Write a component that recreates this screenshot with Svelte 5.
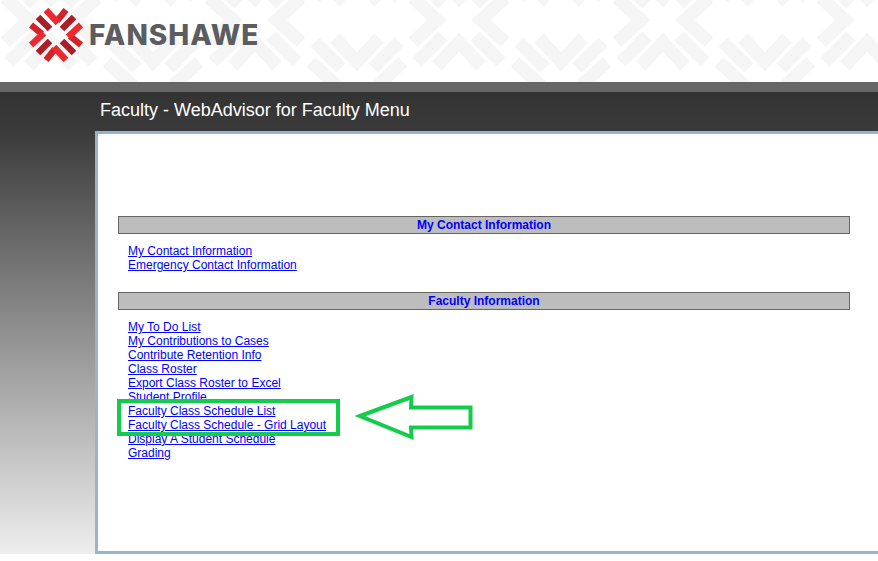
<script>
  const sections = [
    { title: 'My Contact Information', links: ['My Contact Information', 'Emergency Contact Information'] },
    { title: 'Faculty Information', links: ['My To Do List', 'My Contributions to Cases', 'Contribute Retention Info', 'Class Roster', 'Export Class Roster to Excel', 'Student Profile', 'Faculty Class Schedule List', 'Faculty Class Schedule - Grid Layout', 'Display A Student Schedule', 'Grading'] }
  ];
  const arms = [0, 90, 180, 270];
</script>

<div class="page">
  <header class="brand">
    <svg class="pattern" width="878" height="82" aria-hidden="true">
      <defs>
        <g id="motif" fill="none" stroke="#f5f5f5" stroke-width="13">
          <path d="M-22 -46 L0 -22 L22 -46" />
          <path d="M-46 22 L-22 0 L-46 -22" />
          <path d="M22 46 L0 22 L-22 46" />
          <path d="M46 -22 L22 0 L46 22" />
          <path d="M-42 -42 L-16 -16 M42 -42 L16 -16" />
          <path d="M-42 42 L-16 16 M42 42 L16 16" />
        </g>
        <pattern id="weave" width="204" height="128" patternUnits="userSpaceOnUse">
          <use href="#motif" x="51" y="20" />
          <use href="#motif" x="153" y="84" />
          <use href="#motif" x="153" y="-44" />
          <use href="#motif" x="-51" y="84" />
          <use href="#motif" x="51" y="148" />
        </pattern>
      </defs>
      <rect width="878" height="82" fill="url(#weave)" />
    </svg>
    <svg class="mark" width="54" height="54" viewBox="-27 -27 54 54" aria-hidden="true">
      {#each arms as a}
        <g transform="rotate({a})" fill="none" stroke-width="6.5">
          <path d="M-18 -18 L-6 -6" stroke="#a91f27" />
          <path d="M10 -25 L1 -14" stroke="#d2232a" />
          <path d="M-10 -25 L2 -12" stroke="#ea2a2f" />
        </g>
      {/each}
    </svg>
    <span class="wordmark">FANSHAWE</span>
  </header>
  <div class="band"></div>
  <div class="shell">
    <h1>Faculty - WebAdvisor for Faculty Menu</h1>
    <main class="panel">
      {#each sections as s}
        <section>
          <h2>{s.title}</h2>
          <ul>
            {#each s.links as l}
              <li><a href="#top">{l}</a></li>
            {/each}
          </ul>
        </section>
      {/each}
    </main>
    <div class="highlight"></div>
    <svg class="arrow" width="125" height="52" viewBox="352 392 125 52" aria-hidden="true">
      <polygon points="360,416 411.5,397 411,407.5 470.5,407.5 470.5,427.5 411,427.5 411.5,437" fill="none" stroke="#12cc4a" stroke-width="4" />
    </svg>
  </div>
</div>

<style>
  :global(body) {
    margin: 0;
    background: #fff;
  }
  .page {
    width: 878px;
    height: 561px;
    overflow: hidden;
    font-family: "Liberation Sans", Arial, sans-serif;
  }
  .brand {
    position: relative;
    height: 82px;
    display: flex;
    align-items: flex-start;
    background: #fff;
    box-sizing: border-box;
    padding: 8px 0 0 29px;
  }
  .pattern {
    position: absolute;
    inset: 0;
  }
  .mark {
    position: relative;
    flex: none;
  }
  .wordmark {
    position: relative;
    margin: 9px 0 0 6px;
    font-family: Inter, "Liberation Sans", sans-serif;
    font-weight: 800;
    font-size: 28px;
    line-height: 36px;
    letter-spacing: 1px;
    color: #5c5d60;
  }
  .band {
    height: 10px;
    background: #666;
  }
  .shell {
    position: relative;
    height: 462px;
    box-sizing: border-box;
    padding-left: 95px;
    background: linear-gradient(#333 0%, #3a3a3a 8%, #eee 100%);
  }
  h1 {
    margin: 0;
    height: 39px;
    padding-left: 5px;
    font-size: 18px;
    font-weight: 400;
    line-height: 37px;
    color: #fff;
  }
  .panel {
    height: 423px;
    box-sizing: border-box;
    background: #fff;
    border: solid #98b3cd;
    border-width: 3px 0 3px 3px;
    padding: 82px 28px 0 20px;
  }
  section + section {
    margin-top: 20px;
  }
  h2 {
    margin: 0;
    height: 18px;
    box-sizing: border-box;
    background: #bdbdbd;
    border: 1px solid #666;
    font-size: 12px;
    font-weight: 700;
    line-height: 16px;
    text-align: center;
    color: #00f;
  }
  ul {
    list-style: none;
    margin: 10px 0 0;
    padding: 0 0 0 10px;
  }
  li {
    height: 14px;
    font-size: 12px;
    line-height: 14px;
  }
  a {
    color: #00f;
  }
  .highlight {
    position: absolute;
    left: 117px;
    top: 307px;
    width: 223px;
    height: 37px;
    box-sizing: border-box;
    border: 4px solid #12cc4a;
  }
  .arrow {
    position: absolute;
    left: 352px;
    top: 300px;
  }
</style>
